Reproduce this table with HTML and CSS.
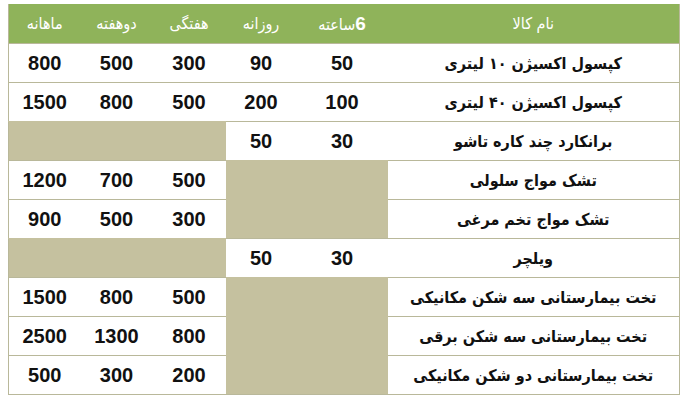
FILE: index.html
```html
<!DOCTYPE html>
<html lang="fa">
<head>
<meta charset="utf-8">
<link rel="stylesheet" href="styles.css">
</head>
<body>
<table class="price" dir="rtl">
  <colgroup>
    <col class="c-name"><col class="c-6h"><col class="c-day"><col class="c-week"><col class="c-2week"><col class="c-month">
  </colgroup>
  <thead>
    <tr><th>نام کالا</th><th><span class="lat">6</span>ساعته</th><th>روزانه</th><th>هفتگی</th><th>دوهفته</th><th>ماهانه</th></tr>
  </thead>
  <tbody>
    <tr><td class="name">کپسول اکسیژن ۱۰ لیتری</td><td>50</td><td>90</td><td>300</td><td>500</td><td>800</td></tr>
    <tr><td class="name">کپسول اکسیژن ۴۰ لیتری</td><td>100</td><td>200</td><td>500</td><td>800</td><td>1500</td></tr>
    <tr><td class="name">برانکارد چند کاره تاشو</td><td>30</td><td>50</td><td class="empty" colspan="3"></td></tr>
    <tr><td class="name">تشک مواج سلولی</td><td class="empty" colspan="2"></td><td>500</td><td>700</td><td>1200</td></tr>
    <tr><td class="name">تشک مواج تخم مرغی</td><td class="empty" colspan="2"></td><td>300</td><td>500</td><td>900</td></tr>
    <tr><td class="name">ویلچر</td><td>30</td><td>50</td><td class="empty" colspan="3"></td></tr>
    <tr><td class="name">تخت بیمارستانی سه شکن مکانیکی</td><td class="empty" colspan="2"></td><td>500</td><td>800</td><td>1500</td></tr>
    <tr><td class="name">تخت بیمارستانی سه شکن برقی</td><td class="empty" colspan="2"></td><td>800</td><td>1300</td><td>2500</td></tr>
    <tr><td class="name">تخت بیمارستانی دو شکن مکانیکی</td><td class="empty" colspan="2"></td><td>200</td><td>300</td><td>500</td></tr>
  </tbody>
</table>
</body>
</html>
```
FILE: styles.css
```css
html, body {
  margin: 0;
  padding: 0;
  background: #ffffff;
}
body {
  padding: 4px 0 0 8px;
}
.price {
  border-collapse: collapse;
  table-layout: fixed;
  width: 671px;
  border-left: 1px solid #b9b89a;
  border-right: 1px solid #b9b89a;
  border-bottom: 1px solid #b9b89a;
}
.c-name { width: 292px; }
.c-6h { width: 91px; }
.c-day { width: 71px; }
.c-week { width: 73px; }
.c-2week { width: 72px; }
.c-month { width: 72px; }
.price th {
  background: #8fb35a;
  color: #ffffff;
  font-family: "DejaVu Sans Condensed", "DejaVu Sans", sans-serif;
  font-weight: normal;
  font-size: 16px;
  height: 39px;
  padding: 0;
  text-align: center;
  vertical-align: middle;
}
.price th .lat {
  font-family: "Liberation Sans", Arial, sans-serif;
  font-weight: bold;
  font-size: 19px;
}
.price td {
  height: 38px;
  padding: 0;
  text-align: center;
  vertical-align: middle;
  border-top: 1px solid #b9b89a;
  font-family: "Liberation Sans", Arial, sans-serif;
  font-weight: bold;
  font-size: 20px;
  color: #111111;
  background: #ffffff;
}
.price td.name {
  font-family: "DejaVu Sans Condensed", "DejaVu Sans", sans-serif;
  font-size: 16px;
}
.price td.empty {
  background: #c5c19f;
  border-top-color: #c5c19f;
}
```
